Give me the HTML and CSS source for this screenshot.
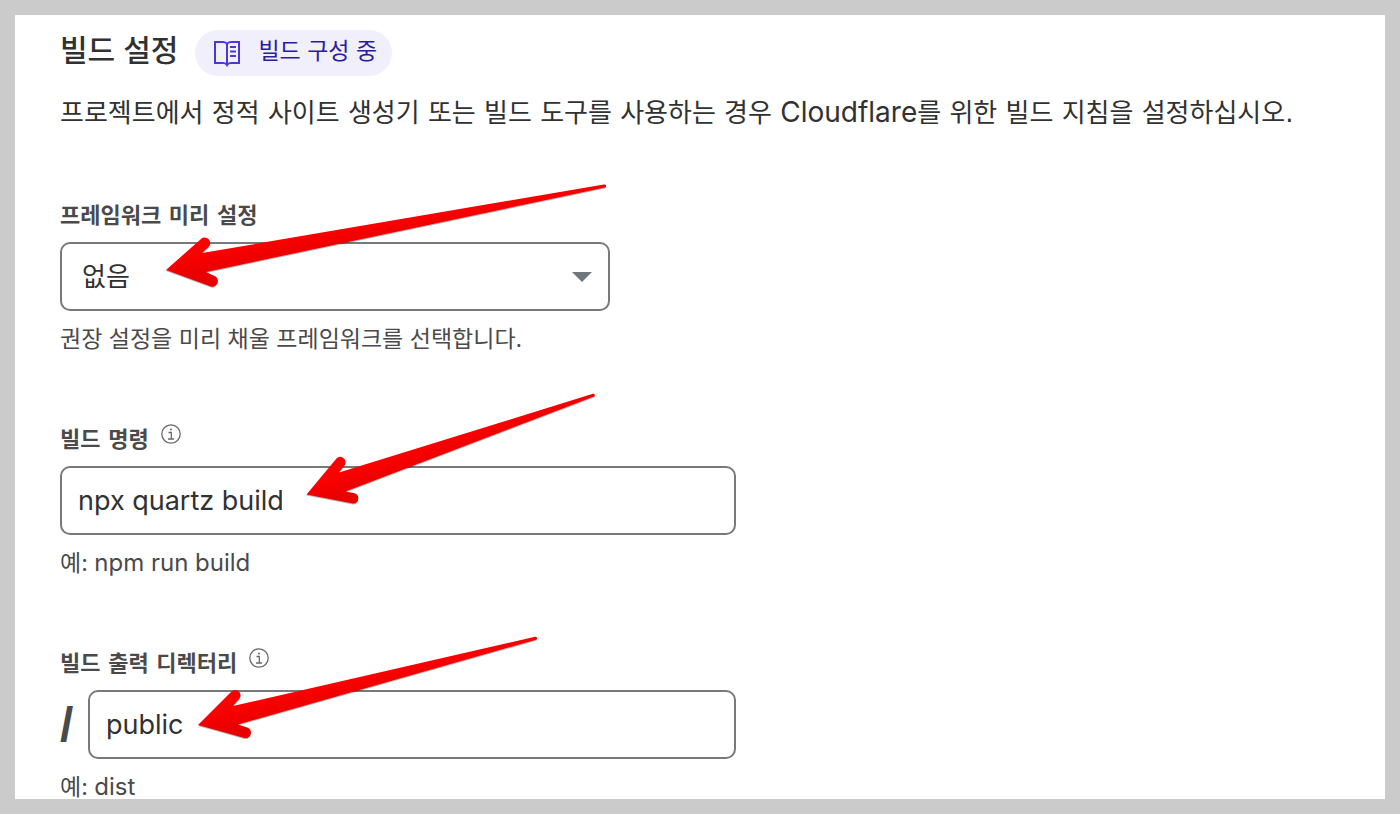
FILE: index.html
```html
<!DOCTYPE html>
<html lang="ko">
<head>
<meta charset="utf-8">
<meta name="viewport" content="width=device-width, initial-scale=1">
<title>빌드 설정</title>
<link rel="stylesheet" href="styles.css">
</head>
<body>
<main class="panel">
  <header class="panel-header">
    <h1 class="title">빌드 설정</h1>
    <a class="docs-link" href="#docs">
      <svg class="docs-icon" viewBox="0 0 28 28" fill="none" stroke="currentColor" stroke-width="2" aria-hidden="true">
        <path d="M2 3h8q3 0 4 2 1-2 4-2h8v21h-8q-3 0-4 2-1-2-4-2H2zM14 5v21"/>
        <path d="M17 8h6M17 12.500h6M17 17h6" />
      </svg>
      <span class="docs-text">빌드 구성 중</span>
    </a>
  </header>
  <p class="description">프로젝트에서 정적 사이트 생성기 또는 빌드 도구를 사용하는 경우 <span class="latin">Cloudflare</span>를 위한 빌드 지침을 설정하십시오.</p>

  <form class="fields">
    <div class="field">
      <label class="label" for="preset">프레임워크 미리 설정</label>
      <div class="select-wrap">
        <select class="control select" id="preset"><option>없음</option></select>
        <svg class="caret" viewBox="0 0 20 10" aria-hidden="true"><path d="M0 0h20L10 10z"/></svg>
      </div>
      <p class="hint">권장 설정을 미리 채울 프레임워크를 선택합니다.</p>
    </div>

    <div class="field">
      <div class="label-row">
        <label class="label" for="command">빌드 명령</label>
        <button class="info" type="button" aria-label="빌드 명령 정보">
          <svg viewBox="0 0 20 20" fill="none" stroke="currentColor" stroke-width="1.300" aria-hidden="true"><circle cx="10" cy="10" r="9.200"/><path d="M7.500 8.500h2.800V15M7 15h6"/><circle cx="10" cy="5.500" r="1" fill="currentColor" stroke="none"/></svg>
        </button>
      </div>
      <input class="control input" id="command" type="text" value="npx quartz build">
      <p class="hint">예: <span class="hint-latin">npm run build</span></p>
    </div>

    <div class="field">
      <div class="label-row">
        <label class="label" for="output">빌드 출력 디렉터리</label>
        <button class="info" type="button" aria-label="빌드 출력 디렉터리 정보">
          <svg viewBox="0 0 20 20" fill="none" stroke="currentColor" stroke-width="1.300" aria-hidden="true"><circle cx="10" cy="10" r="9.200"/><path d="M7.500 8.500h2.800V15M7 15h6"/><circle cx="10" cy="5.500" r="1" fill="currentColor" stroke="none"/></svg>
        </button>
      </div>
      <div class="path-row">
        <span class="slash">/</span>
        <input class="control input" id="output" type="text" value="public">
      </div>
      <p class="hint">예: <span class="hint-latin">dist</span></p>
    </div>
  </form>
</main>

<svg class="arrows" width="1400" height="814" viewBox="0 0 1400 814" aria-hidden="true">
  <defs>
    <linearGradient id="red1" gradientUnits="userSpaceOnUse" x1="290" y1="234" x2="294" y2="256"><stop offset="0" stop-color="#ff0000"/><stop offset="1" stop-color="#e90000"/></linearGradient>
    <linearGradient id="red2" gradientUnits="userSpaceOnUse" x1="390" y1="455" x2="397" y2="475"><stop offset="0" stop-color="#ff0000"/><stop offset="1" stop-color="#e90000"/></linearGradient>
    <linearGradient id="red3" gradientUnits="userSpaceOnUse" x1="290" y1="691" x2="295" y2="712"><stop offset="0" stop-color="#ff0000"/><stop offset="1" stop-color="#e90000"/></linearGradient>
  </defs>
  <path fill="url(#red1)" d="M166 270 201 239A5.500 5.500 0 0 1 209 246.500L202 253 604 184.500A1.500 1.500 0 0 1 605 187.500L206 272 213.500 275.500A5.500 5.500 0 0 1 211 286.500Z"/>
  <path fill="url(#red2)" d="M306.500 494.500 336.500 458.500A5.300 5.300 0 0 1 345 464.500L339 472.500 593 393.800A1.500 1.500 0 0 1 594 396.600L345.500 491.500 354.500 493.300A5.200 5.200 0 0 1 353 503.500Z"/>
  <path fill="url(#red3)" d="M198 725 231.500 691.500A5.300 5.300 0 0 1 239 699L233 706 535 636.800A1.500 1.500 0 0 1 536 639.700L238 724.500 246.500 727.300A5.400 5.400 0 0 1 244.500 738Z"/>
</svg>
</body>
</html>
```
FILE: styles.css
```css
* {
  box-sizing: border-box;
}

body {
  margin: 0;
  height: 100vh;
  padding: 15px;
  overflow: hidden;
  background: #cbcbcb;
  color: #313131;
  font-family: Inter, "Noto Sans CJK KR", sans-serif;
}

.panel {
  height: 100%;
  padding: 15px 45px 0;
  overflow: hidden;
  background: #fff;
}

.panel-header {
  display: flex;
  align-items: center;
  gap: 17px;
}

.title {
  margin: 0;
  padding-bottom: 6px;
  font-size: 30px;
  line-height: 40px;
  font-weight: 500;
}

.docs-link {
  display: flex;
  align-items: center;
  gap: 17px;
  height: 46px;
  padding: 0 15px 0 18px;
  border-radius: 23px;
  background: #f1effc;
  color: #2b1ca3;
  font-size: 23px;
  text-decoration: none;
}

.docs-text {
  padding-bottom: 4px;
  line-height: 32px;
}

.docs-icon {
  width: 28px;
  height: 28px;
  color: #4a38db;
}

.description {
  margin: 17px 0 67px;
  font-family: "DejaVu Sans", "Noto Sans CJK KR", sans-serif;
  font-size: 26px;
  line-height: 40px;
}

.latin {
  font-family: Inter, sans-serif;
  font-size: 28px;
  line-height: 32px;
}

.fields {
  display: flex;
  flex-direction: column;
  gap: 73px;
}

.field {
  max-width: 676px;
}

.label-row {
  display: flex;
}

.label {
  display: block;
  color: #4a4a4a;
  font-family: "DejaVu Sans", "Noto Sans CJK KR", sans-serif;
  font-size: 22px;
  line-height: 32px;
  font-weight: 600;
}

.info {
  width: 20px;
  height: 20px;
  margin-left: 12px;
  padding: 0;
  border: 0;
  background: none;
  color: #6a6a6a;
}

.info svg {
  display: block;
}

.control {
  display: block;
  width: 100%;
  height: 69px;
  margin: 0;
  border: 2px solid #797979;
  border-radius: 10px;
  background: #fff;
  color: #313131;
  font-family: Inter, "Noto Sans CJK KR", sans-serif;
}

.field > .control,
.select-wrap,
.path-row {
  margin-top: 10px;
}

.select-wrap {
  position: relative;
  max-width: 550px;
}

.select {
  appearance: none;
  padding: 0 50px 0 20px;
  font-size: 26px;
}

.caret {
  position: absolute;
  top: 30px;
  right: 18px;
  width: 20px;
  height: 10px;
  fill: #6f777c;
  pointer-events: none;
}

.input {
  padding: 0 16px;
  font-size: 27px;
}

.path-row {
  display: flex;
  align-items: center;
}

.slash {
  flex: 0 0 28px;
  color: #4a4a4a;
  font-family: "Liberation Sans", sans-serif;
  font-size: 48px;
  line-height: 48px;
  font-weight: 700;
}

.hint {
  margin: 16px 0 0;
  color: #4a4a4a;
  font-size: 23px;
  line-height: 24px;
}

.hint-latin {
  font-size: 24px;
  line-height: 20px;
}

.arrows {
  position: absolute;
  top: 0;
  left: 0;
  pointer-events: none;
  filter: drop-shadow(0 1px 0 rgba(0, 0, 0, 0.3));
}
```
